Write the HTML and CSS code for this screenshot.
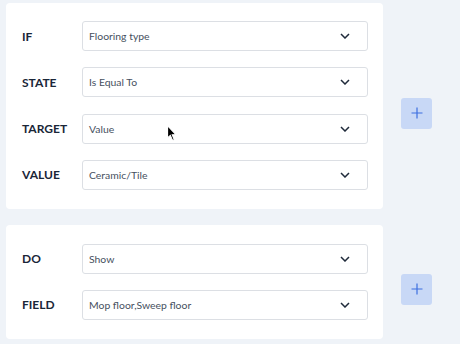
FILE: index.html
```html
<!DOCTYPE html>
<html>
<head>
<meta charset="utf-8">
<link rel="stylesheet" href="styles.css">
</head>
<body>
<div class="page">
  <div class="group group-if">
    <div class="card">
      <div class="row"><span class="label">IF</span><div class="select"><span>Flooring type</span><svg class="chev" viewBox="0 0 10 6"><path d="M1 1 L5 5 L9 1"/></svg></div></div>
      <div class="row"><span class="label">STATE</span><div class="select"><span>Is Equal To</span><svg class="chev" viewBox="0 0 10 6"><path d="M1 1 L5 5 L9 1"/></svg></div></div>
      <div class="row"><span class="label">TARGET</span><div class="select"><span>Value</span><svg class="chev" viewBox="0 0 10 6"><path d="M1 1 L5 5 L9 1"/></svg></div></div>
      <div class="row"><span class="label">VALUE</span><div class="select"><span>Ceramic/Tile</span><svg class="chev" viewBox="0 0 10 6"><path d="M1 1 L5 5 L9 1"/></svg></div></div>
    </div>
    <button class="add"><svg viewBox="0 0 12 12"><path d="M6 0.5 V11.5 M0.5 6 H11.5"/></svg></button>
  </div>
  <div class="group group-do">
    <div class="card">
      <div class="row"><span class="label">DO</span><div class="select"><span>Show</span><svg class="chev" viewBox="0 0 10 6"><path d="M1 1 L5 5 L9 1"/></svg></div></div>
      <div class="row"><span class="label">FIELD</span><div class="select"><span>Mop floor,Sweep floor</span><svg class="chev" viewBox="0 0 10 6"><path d="M1 1 L5 5 L9 1"/></svg></div></div>
    </div>
    <button class="add"><svg viewBox="0 0 12 12"><path d="M6 0.5 V11.5 M0.5 6 H11.5"/></svg></button>
  </div>
  <svg class="cursor" viewBox="0 0 9 15"><path d="M0.5 0.5 L0.5 11.5 L3 9.2 L5 13.8 L6.6 13.1 L4.7 8.6 L8 8.4 Z"/></svg>
</div>
</body>
</html>
```
FILE: styles.css
```css
html, body {
  margin: 0;
  padding: 0;
  background: #eff3f8;
  font-family: Lato, "Liberation Sans", sans-serif;
}
.page {
  position: relative;
  width: 460px;
  height: 344px;
  padding: 3px 0 0 6px;
  box-sizing: border-box;
  display: flex;
  flex-direction: column;
  gap: 16px;
}
.group {
  display: flex;
  align-items: center;
  gap: 18px;
}
.card {
  width: 377px;
  box-sizing: border-box;
  background: #ffffff;
  border-radius: 4px;
  padding: 18px 15px 19px 16px;
  display: flex;
  flex-direction: column;
  gap: 16.3px;
}
.group-do .card {
  padding-top: 19px;
  gap: 16px;
}
.row {
  display: flex;
  align-items: center;
}
.label {
  width: 60px;
  font-size: 12px;
  font-weight: 700;
  color: #1a2638;
}
.select {
  flex: 1;
  height: 30px;
  box-sizing: border-box;
  border: 1px solid #dcdfe4;
  border-radius: 3px;
  display: flex;
  align-items: center;
  justify-content: space-between;
  padding: 0 17px 0 6px;
  font-size: 10.4px;
  color: #465060;
}
.chev {
  width: 10px;
  height: 6px;
  fill: none;
  stroke: #1f2a3a;
  stroke-width: 1.5;
}
.add {
  width: 31px;
  height: 31px;
  margin-top: 15px;
  border: none;
  border-radius: 3px;
  background: #c8d8f6;
  display: flex;
  align-items: center;
  justify-content: center;
  padding: 0;
}
.add svg {
  width: 12px;
  height: 12px;
  fill: none;
  stroke: #3d6fe0;
  stroke-width: 1.2;
}
.cursor {
  position: absolute;
  left: 166.5px;
  top: 124.5px;
  width: 10px;
  height: 17px;
  fill: #000;
  stroke: #fff;
  stroke-width: 1;
}
```
